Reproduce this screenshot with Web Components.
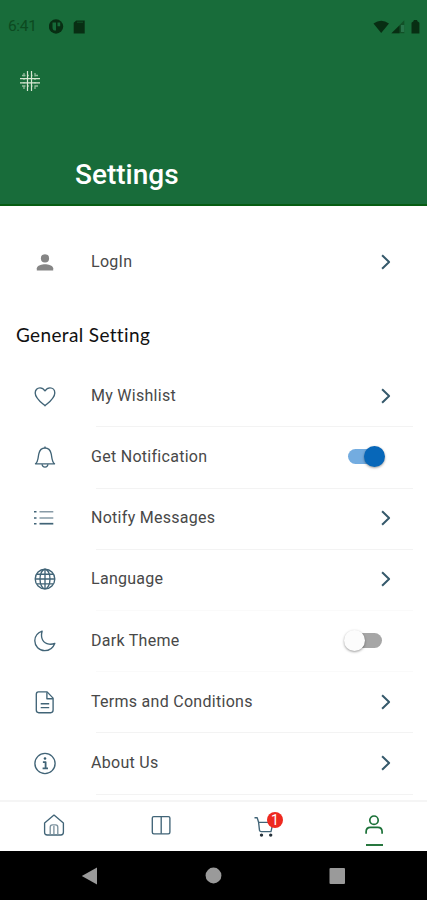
<!DOCTYPE html>
<html lang="en">
<head>
<meta charset="utf-8">
<title>Settings</title>
<style>
html,body{margin:0;padding:0;background:#fff}
body{width:427px;height:900px;overflow:hidden;font-family:Roboto,"Noto Sans",sans-serif}
</style>
</head>
<body>
<settings-app></settings-app>
<script>
const ICONS = {
  person: '<g fill="#858585" stroke="none"><circle cx="12" cy="8.400" r="4.100"/><path d="M3.800 20.500v-2.200c0-2.700 5.400-4.100 8.200-4.100s8.200 1.400 8.200 4.100v2.200z"/></g>',
  heart: '<path d="M12 21.700C8.600 18.700 2.200 14.300 2.200 8.900 2.200 5.800 4.300 3.800 7 3.800c2.200 0 3.800 1.200 5 3.100 1.200-1.900 2.800-3.100 5-3.100 2.700 0 4.800 2 4.800 5.100 0 5.400-6.400 9.800-9.800 12.800z"/>',
  bell: '<path d="M2.500 18.800c2.900-2.300 2.400-6 3.300-10C6.600 5.300 8.300 3 12 3s5.400 2.300 6.200 5.800c.9 4 .4 7.700 3.300 10z"/><path d="M9.100 19.200c.3 3.800 5.500 3.800 5.800 0M12 1.400V3"/>',
  list: '<path d="M6.500 5.700H20.300M6.500 12H20.300" stroke="#879aa6" stroke-width="1.500"/><path d="M6.500 17.700H20.300" stroke-width="1.700"/><path d="M1 5.700h2.500M1 12h2.500M1 17.700h2.500" stroke-width="1.500"/>',
  globe: '<circle cx="12" cy="12" r="9.800"/><ellipse cx="12" cy="12" rx="5" ry="9.800"/><path d="M12 2.200v19.600M2.200 12h19.600M4 7.200h16M4 16.800h16"/>',
  moon: '<path d="M9.100 2.200C4.800 3.800 1.800 7.300 1.800 11.800c0 5.400 4.300 9.800 9.900 9.800 4.500 0 8.400-2.900 10.100-7.200-2.100.8-4 1-5.800.7-5.900-.8-8.800-5.900-6.900-12.900z"/>',
  doc: '<path d="M5.400 1.900h8.700l6 6.200v12c0 1.600-.8 2.600-2.400 2.600H5.800c-1.600 0-2.500-1-2.500-2.600V4.400c0-1.500.7-2.500 2.100-2.500z" /><path d="M13.900 2.200v6.500h6M7.700 13.700h8.500M7.700 17.600h8.500"/>',
  info: '<circle cx="12" cy="12.500" r="10.100"/><path d="M9.900 11.100h2.700v6M9.600 17.300h5.400" stroke-width="1.800"/><circle cx="12" cy="7.500" r="1.300" fill="#365b6f" stroke="none"/>',
  chevron: '<path d="M8.100 5.200 15.100 12 8.100 18.800" stroke="#35596b" stroke-width="2"/>',
  home: '<path d="M2.600 9.900 12 2.100l9.400 7.800v9.400c0 1.800-.8 2.700-2.600 2.700H5.200c-1.800 0-2.600-.9-2.600-2.700z"/><path d="M8.200 21.900v-7.500c0-1.700.7-2.500 2.100-2.500h3.400c1.400 0 2.100.8 2.100 2.500v7.500M11.900 13v8.500" stroke="#7d929e"/>',
  columns: '<rect x="3.300" y="3.600" width="17.600" height="17.200" rx="1.500"/><path d="M12.200 3.600v17.200"/>',
  cart: '<path d="M1.500 4.700h2.700l1.400 4.600.9 8c.2.800.7 1.300 1.600 1.300H18l2-9.200H5.600"/><g fill="#26333c" stroke="none"><circle cx="8.500" cy="22.100" r="1.700"/><circle cx="17.700" cy="22.100" r="1.700"/></g>',
  user: '<g stroke="#1b7138" stroke-width="1.700"><circle cx="12" cy="7.200" r="4.200"/><path d="M4.100 20.800v-2c0-2.900 1.600-4.400 4.300-4.400h7.400c2.700 0 4.300 1.500 4.300 4.400v2"/></g>'
};

class UiIcon extends HTMLElement {
  connectedCallback() {
    this.attachShadow({mode:'open'}).innerHTML = `
      <style>:host{display:block;width:24px;height:24px;flex:none}svg{display:block}</style>
      <svg width="24" height="24" viewBox="0 0 24 24" fill="none" stroke="#416477" stroke-width="1.350" stroke-linejoin="round">${ICONS[this.getAttribute('name')]}</svg>`;
  }
}

class UiSwitch extends HTMLElement {
  connectedCallback() {
    this.attachShadow({mode:'open'}).innerHTML = `
      <style>
        :host{display:flex;align-items:center;width:33px;height:15px;border-radius:8px;background:#a6a6a6}
        i{width:21px;height:21px;flex:none;border-radius:50%;background:#fcfcfc;margin-left:-5px;box-shadow:0 1px 2.500px rgba(0,0,0,.4)}
        :host([on]){background:#73ace0}
        :host([on]) i{background:#0767b9;margin-left:16px}
      </style><i></i>`;
  }
}

class StatusBar extends HTMLElement {
  connectedCallback() {
    this.attachShadow({mode:'open'}).innerHTML = `
      <style>
        :host{display:flex;align-items:center;height:53px;padding:0 5px 0 8px;color:#0c4a20;font-size:15.500px;letter-spacing:-.350px}
        span{width:41px;line-height:53px}
        svg{display:block}
        .r{margin-left:auto}
      </style>
      <span>6:41</span>
      <svg width="38" height="16" viewBox="0 0 38 16"><circle cx="7" cy="7.500" r="7.200" fill="#082e13"/><path d="M3.500 3.500h3.500v8H5.500c-1.300 0-2-1.500-2-3zM8.500 3.500h2.700v3.700H8.500z" fill="#166b39"/><path d="M24.700 3.800 27.300 1.500h8.400v12.900h-11z" fill="#082e13"/><path d="M28 3.200h6" stroke="#115529" stroke-width="1"/></svg>
      <svg class="r" width="50" height="16" viewBox="0 0 50 16"><path d="M1.500 4.500Q9.200-1.200 17 4.500L9.200 14z" fill="#082e13"/><path d="M32.300 1.300v13H19.500z" fill="#115027"/><path d="M27.500 6.500v7.800h-8z" fill="#082e13"/><path d="M29 6h3.300v7H29z" fill="#28734a"/><path d="M39.500 14.400V3.800L41.700 2V1h3.500v1l2.200 1.800v10.600z" fill="#082e13"/></svg>`;
  }
}

class AppHeader extends HTMLElement {
  connectedCallback() {
    this.attachShadow({mode:'open'}).innerHTML = `
      <style>
        :host{display:block;height:206px;box-sizing:border-box;background:#186c3a;border-bottom:2px solid #075d13}
        .logo{display:block;margin:17px 0 0 19px}
        h1{margin:66px 0 0 75px;color:#fff;font-size:28px;line-height:34px;font-weight:500;letter-spacing:0}
      </style>
      <status-bar></status-bar>
      <svg class="logo" width="22" height="22" viewBox="0 0 22 22" fill="none" stroke="#d9e7d3"><path d="M8.500 1v20M12.500 1v20M1 8.700h20M1 12.800h20" stroke-width="1.200"/><path d="M5 3v16M16 3v16M3 5.500h16M3 16h16" stroke-width="1.300" stroke-dasharray="3.500 2 1.500 2 1.500 2 3.500 2" opacity=".65"/></svg>
      <h1><slot></slot></h1>`;
  }
}

class SettingRow extends HTMLElement {
  connectedCallback() {
    const sw = this.getAttribute('switch');
    const end = sw === null ? '<ui-icon name="chevron"></ui-icon>' : `<ui-switch ${sw}></ui-switch>`;
    this.attachShadow({mode:'open'}).innerHTML = `
      <style>
        :host{display:grid;grid-template-columns:24px 1fr auto;column-gap:34px;align-items:center;height:61.200px;box-sizing:border-box;padding:0 29px 2px 33px;
          background:linear-gradient(#f3f3f3,#f3f3f3) 96px 100%/317px 1px no-repeat}
        :host([plain]){background:none}
        :host([faint]){background-image:linear-gradient(#fafafa,#fafafa)}
        .t{font-size:16px;line-height:24px;color:#484848;letter-spacing:.280px;white-space:nowrap}
        ui-switch{margin-right:16.500px}
        ui-switch[on]{margin-right:17px}
      </style>
      <ui-icon name="${this.getAttribute('icon')}"></ui-icon>
      <span class="t"><slot></slot></span>${end}`;
  }
}

class TabBar extends HTMLElement {
  connectedCallback() {
    this.attachShadow({mode:'open'}).innerHTML = `
      <style>
        :host{display:grid;grid-template-columns:repeat(4,106.700px);height:51px;box-sizing:border-box;border-top:2px solid #f5f5f5;background:#fff;padding-left:1px}
        div{display:flex;flex-direction:column;align-items:center;padding-top:11px;position:relative}
        .cart ui-icon{margin-left:-6px}
        b{position:absolute;left:52.500px;top:10px;width:16px;height:16px;border-radius:50%;background:#ee291f;color:#fff;font-size:14px;line-height:16px;font-weight:400;text-align:center}
        u{width:17px;height:2px;margin-top:7px;background:#28773f}
      </style>
      <div><ui-icon name="home"></ui-icon></div>
      <div><ui-icon name="columns"></ui-icon></div>
      <div class="cart"><ui-icon name="cart"></ui-icon><b>1</b></div>
      <div><ui-icon name="user"></ui-icon><u></u></div>`;
  }
}

class SystemNav extends HTMLElement {
  connectedCallback() {
    this.attachShadow({mode:'open'}).innerHTML = `
      <style>:host{display:flex;align-items:center;justify-content:space-between;height:49px;padding:0 81px 0 81px;box-sizing:border-box;background:#000}svg{display:block}</style>
      <svg width="17" height="18"><path d="M.8 9 16 .5v17z" fill="#9a9a9a"/></svg>
      <svg width="17" height="17"><circle cx="8.500" cy="8.500" r="7.900" fill="#9a9a9a"/></svg>
      <svg width="17" height="18"><rect x=".500" y="1" width="15.500" height="16" rx="1" fill="#9a9a9a"/></svg>`;
  }
}

class SettingsApp extends HTMLElement {
  connectedCallback() {
    this.attachShadow({mode:'open'}).innerHTML = `
      <style>
        :host{display:flex;flex-direction:column;width:427px;height:900px;background:#fff}
        main{flex:1;min-height:0;overflow:hidden;padding-top:26px}
        h2{margin:29px 0 18px 16px;font:400 19px/26px Lato,"Noto Sans",sans-serif;letter-spacing:.350px;color:#111;white-space:nowrap}
      </style>
      <app-header>Settings</app-header>
      <main>
        <setting-row icon="person" plain>LogIn</setting-row>
        <h2>General Setting</h2>
        <setting-row icon="heart">My Wishlist</setting-row>
        <setting-row icon="bell" switch="on">Get Notification</setting-row>
        <setting-row icon="list">Notify Messages</setting-row>
        <setting-row icon="globe" faint>Language</setting-row>
        <setting-row icon="moon" switch="off" faint>Dark Theme</setting-row>
        <setting-row icon="doc">Terms and Conditions</setting-row>
        <setting-row icon="info">About Us</setting-row>
      </main>
      <tab-bar></tab-bar>
      <system-nav></system-nav>`;
  }
}

customElements.define('ui-icon', UiIcon);
customElements.define('ui-switch', UiSwitch);
customElements.define('status-bar', StatusBar);
customElements.define('app-header', AppHeader);
customElements.define('setting-row', SettingRow);
customElements.define('tab-bar', TabBar);
customElements.define('system-nav', SystemNav);
customElements.define('settings-app', SettingsApp);
</script>
</body>
</html>
